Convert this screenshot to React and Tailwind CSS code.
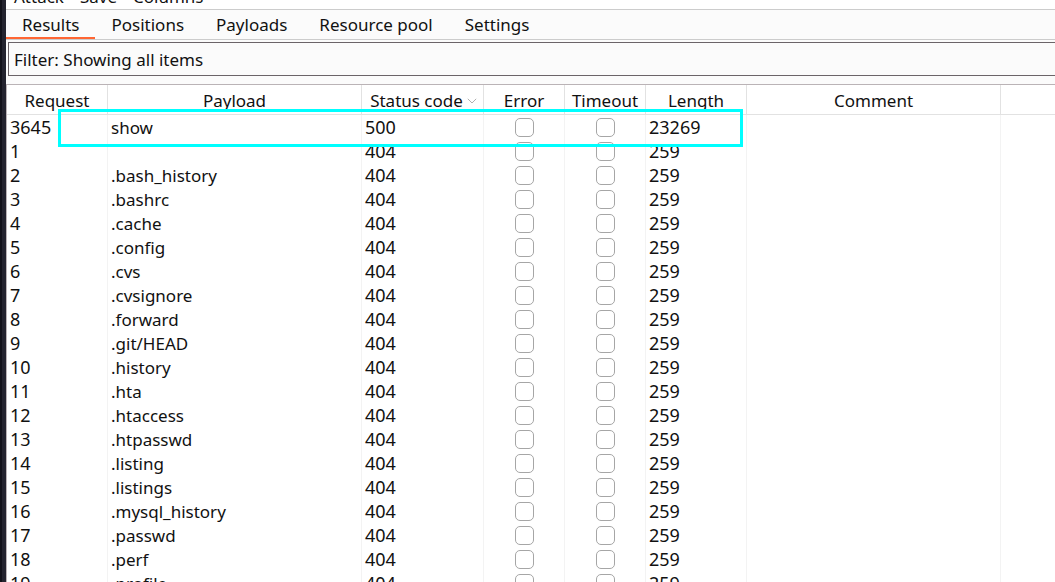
import React from 'react';

const menus = ['Attack', 'Save', 'Columns'];
const tabs = ['Results', 'Positions', 'Payloads', 'Resource pool', 'Settings'];

const payloads = [
  '', '.bash_history', '.bashrc', '.cache', '.config', '.cvs', '.cvsignore',
  '.forward', '.git/HEAD', '.history', '.hta', '.htaccess', '.htpasswd',
  '.listing', '.listings', '.mysql_history', '.passwd', '.perf', '.profile',
];

const rows = [
  { id: 3645, payload: 'show', status: 500, length: 23269 },
  ...payloads.map((payload, i) => ({ id: i + 1, payload, status: 404, length: 259 })),
];

const headings = ['Request', 'Payload', 'Status code', 'Error', 'Timeout', 'Length', 'Comment'];

function SortArrow() {
  return (
    <svg viewBox="0 0 10 6" className="h-1.5 w-2.5" fill="none" stroke="#b0b0b0" aria-hidden="true">
      <path d="M0.8 0.8 L5 5 L9.2 0.8" />
    </svg>
  );
}

function Check({ label }) {
  return (
    <input
      type="checkbox"
      aria-label={label}
      className="mx-auto block size-[19px] appearance-none rounded-[5px] border border-[#a6a6a6] bg-white checked:bg-[#ff6633]"
    />
  );
}

function ResultRow({ row }) {
  const line = 'border-r border-[#f3f3f3] px-[3px]';
  const text = `${line} pt-0.5 pb-0 leading-[22px]`;
  const number = `${line} py-0 text-lg/6`;
  return (
    <tr className="h-6">
      <td className={number}>{row.id}</td>
      <td className={text}>{row.payload}</td>
      <td className={number}>{row.status}</td>
      <td className={`${line} py-0`}><Check label={`Error for request ${row.id}`} /></td>
      <td className={`${line} py-0`}><Check label={`Timeout for request ${row.id}`} /></td>
      <td className={number}>{row.length}</td>
      <td className={text}></td>
      <td></td>
    </tr>
  );
}

export default function App() {
  return (
    <div className="flex h-screen overflow-hidden border-l-2 border-[#12121a] bg-[#24242f] pl-1 font-['Noto_Sans',sans-serif] text-[17px] leading-6 text-[#111111]">
      <main className="flex min-w-0 flex-1 flex-col bg-[#fbfbfb]">
        <nav aria-label="Menu" className="flex h-[9px] shrink-0 items-end gap-4 overflow-hidden bg-white px-2">
          {menus.map((m) => <button key={m} type="button">{m}</button>)}
        </nav>
        <div role="tablist" className="flex h-[31px] shrink-0 border-y border-[#cccccc]">
          {tabs.map((t, i) => (
            <button
              key={t}
              type="button"
              role="tab"
              aria-selected={i === 0}
              className={`border-b-2 px-4 pt-0.5 ${i === 0 ? 'border-[#ff6633]' : 'border-transparent'}`}
            >
              {t}
            </button>
          ))}
        </div>
        <div className="shrink-0 pt-0.5 pb-2 pl-0.5">
          <button type="button" className="block h-[34px] w-full border border-r-0 border-[#6b6468] px-[5px] pt-0.5 text-left">
            Filter: Showing all items
          </button>
        </div>
        <section className="relative min-h-0 flex-1 overflow-hidden border-t border-l border-[#bab3b6] bg-white">
          <table className="w-full table-fixed border-separate border-spacing-0">
            <colgroup>
              <col className="w-[101px]" />
              <col className="w-[254px]" />
              <col className="w-[122px]" />
              <col className="w-[81px]" />
              <col className="w-[81px]" />
              <col className="w-[101px]" />
              <col className="w-[254px]" />
              <col />
            </colgroup>
            <thead>
              <tr className="h-[30px]">
                {headings.map((h) => (
                  <th key={h} scope="col" className="border-r border-b border-[#e2e2e2] px-0 pt-0.5 pb-0 font-normal">
                    <button
                      type="button"
                      className={`inline-flex items-center gap-1 whitespace-nowrap ${h === 'Status code' ? 'pl-0.5' : ''}`}
                    >
                      {h}
                      {h === 'Status code' && <SortArrow />}
                    </button>
                  </th>
                ))}
                <td className="border-b border-[#e2e2e2]"></td>
              </tr>
            </thead>
            <tbody>
              {rows.map((row) => <ResultRow key={row.id} row={row} />)}
            </tbody>
          </table>
          <div className="pointer-events-none absolute top-6 left-[51px] h-[38px] w-[685px] border-3 border-[#00ffff]" />
        </section>
      </main>
    </div>
  );
}
